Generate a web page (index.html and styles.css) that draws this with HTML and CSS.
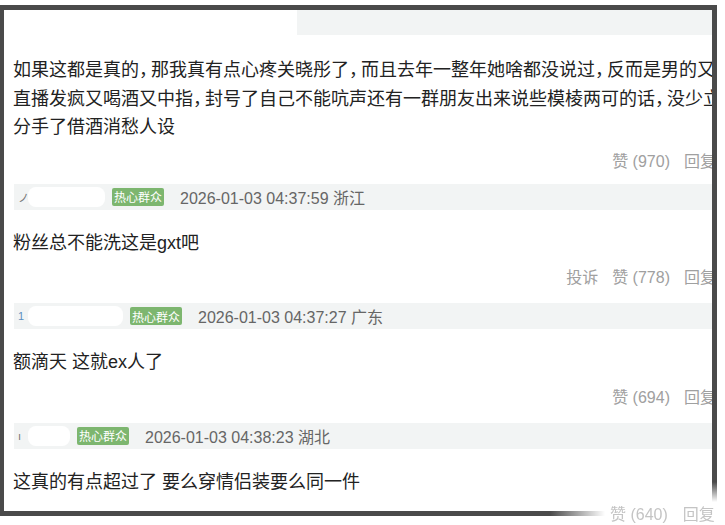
FILE: index.html
```html
<!DOCTYPE html>
<html lang="zh-CN">
<head>
    <meta charset="UTF-8">
    <title>评论</title>
    <link rel="stylesheet" href="styles.css">
</head>
<body>
    <div class="shot">
        <div class="frame">
            <div class="sheet">
                <div class="comment first">
                    <div class="meta meta-cut"></div>
                    <p class="text">如果这都是真的<span class="punc">，</span>那我真有点心疼关晓彤了<span class="punc">，</span>而且去年一整年她啥都没说过<span class="punc">，</span>反而是男的又直播发疯又喝酒又中指<span class="punc">，</span>封号了自己不能吭声还有一群朋友出来说些模棱两可的话<span class="punc">，</span>没少立分手了借酒消愁人设</p>
                    <div class="actions"><span>赞 (970)</span><span>回复</span></div>
                </div>

                <div class="comment">
                    <div class="meta">
                        <span class="name name-a"><i class="frag">ノ</i><i class="mask"></i></span>
                        <span class="badge">热心群众</span>
                        <span class="date">2026-01-03 04:37:59 浙江</span>
                    </div>
                    <p class="text">粉丝总不能洗这是gxt吧</p>
                    <div class="actions"><span>投诉</span><span>赞 (778)</span><span>回复</span></div>
                </div>

                <div class="comment">
                    <div class="meta">
                        <span class="name name-b"><i class="frag frag-blue">1</i><i class="mask"></i></span>
                        <span class="badge">热心群众</span>
                        <span class="date">2026-01-03 04:37:27 广东</span>
                    </div>
                    <p class="text">额滴天 这就ex人了</p>
                    <div class="actions"><span>赞 (694)</span><span>回复</span></div>
                </div>

                <div class="comment">
                    <div class="meta">
                        <span class="name name-c"><i class="frag">ı</i><i class="mask"></i></span>
                        <span class="badge">热心群众</span>
                        <span class="date">2026-01-03 04:38:23 湖北</span>
                    </div>
                    <p class="text">这真的有点超过了 要么穿情侣装要么同一件</p>
                </div>
            </div>
        </div>

        <!-- worn-out corner of the photo, last action row bleeds below the frame -->
        <div class="fade-bottom"></div>
        <div class="fade-right"></div>
        <div class="ghost">赞 (640)<span>回复</span></div>
    </div>
</body>
</html>
```

FILE: styles.css
```css
body {
    margin: 0;
    padding: 0;
    background-color: #ffffff;
    font-family: "Liberation Sans", "Noto Sans CJK SC", sans-serif;
    color: #222222;
}
.shot {
    position: relative;
    width: 725px;
    height: 525px;
    overflow: hidden;
}
.frame {
    margin-top: 5px;
    width: 708px;
    height: 501px;
    border: 5px solid #4a4a4a;
    border-left-width: 4px;
    overflow: hidden;
    background-color: #ffffff;
}
.sheet {
    width: 732px;
    padding-left: 9px;
    box-sizing: border-box;
}
.comment {
    display: flex;
    flex-direction: column;
    margin-top: 15px;
}
.comment.first {
    margin-top: 0;
}
.comment.first + .comment {
    margin-top: 12px;
}
.meta {
    display: flex;
    align-items: center;
    height: 26px;
    margin-left: 1px;
    background-color: #f2f4f4;
}
.meta-cut {
    height: 25px;
    margin-left: 284px;
}
.name {
    display: flex;
    align-items: center;
    height: 26px;
}
.name-a {
    width: 91px;
}
.name-b {
    width: 109px;
}
.name-c {
    width: 56px;
}
.frag {
    font-style: normal;
    font-size: 11px;
    color: #777777;
    width: 14px;
    padding-left: 4px;
    box-sizing: border-box;
}
.frag-blue {
    color: #5b8fc0;
}
.mask {
    flex: 1;
    height: 20px;
    background-color: #ffffff;
    border-radius: 8px;
}
.badge {
    display: inline-flex;
    align-items: center;
    height: 18px;
    margin-left: 7px;
    padding: 0 2px;
    font-size: 12px;
    color: #ffffff;
    background-color: #7db66f;
    border-radius: 2px;
}
.date {
    margin-left: 16px;
    font-size: 16px;
    color: #666666;
}
.text {
    margin: 19px 0 0;
    padding-right: 10px;
    font-size: 18px;
    line-height: 28.5px;
    color: #222222;
}
.text .punc {
    letter-spacing: -6px;
}
.comment.first .text {
    margin-top: 21px;
}
.actions {
    display: flex;
    justify-content: flex-end;
    gap: 14px;
    margin-top: 11px;
    padding-right: 20px;
    height: 20px;
    line-height: 20px;
    font-size: 16px;
    color: #a0a0a0;
}
.comment.first .actions {
    margin-top: 10px;
}
.fade-bottom {
    position: absolute;
    left: 550px;
    top: 505px;
    width: 175px;
    height: 20px;
    background: linear-gradient(to right, rgba(255, 255, 255, 0), #ffffff 55px);
}
.fade-right {
    position: absolute;
    left: 705px;
    top: 482px;
    width: 20px;
    height: 43px;
    background: linear-gradient(to bottom, rgba(255, 255, 255, 0), #ffffff 20px);
}
.ghost {
    position: absolute;
    left: 610px;
    top: 505px;
    font-size: 16px;
    line-height: 20px;
    color: #c4c4c4;
    filter: blur(0.7px);
}
.ghost span {
    margin-left: 15px;
}
```
